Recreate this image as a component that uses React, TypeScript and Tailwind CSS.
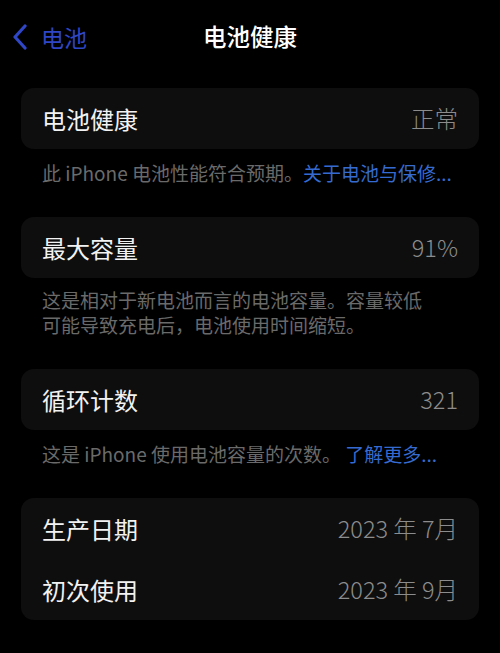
const cjk = { fontFamily: '"Noto Sans CJK SC", "Noto Sans", sans-serif' }

function Row({ label, value }: { label: string; value: string }) {
  return (
    <div className="flex items-center justify-between px-[21px] h-[61px]">
      <span className="text-[24px] text-[#f2f2f2] leading-none">{label}</span>
      <span className="text-[23.5px] font-light text-[#8c8c8c] leading-none">{value}</span>
    </div>
  )
}

function Card({ children }: { children: React.ReactNode }) {
  return <div className="mx-[21px] rounded-[13px] bg-[#0e0e0e]">{children}</div>
}

function Note({ children, className = '' }: { children: React.ReactNode; className?: string }) {
  return (
    <p className={`px-[42px] text-[19px] leading-[25px] text-[#6a6a6a] ${className}`}>{children}</p>
  )
}

export default function App() {
  return (
    <div className="w-[500px] h-[653px] bg-black overflow-hidden" style={cjk}>
      {/* nav bar */}
      <div className="relative h-[74px] flex items-center justify-center">
        <div className="absolute left-[11px] top-[24px] flex items-center gap-[12px] text-[#2f46c6]">
          <svg width="18" height="26" viewBox="0 0 18 26" fill="none">
            <path d="M14 2 L4 13 L14 24" stroke="currentColor" strokeWidth="3.2" strokeLinecap="round" strokeLinejoin="round" />
          </svg>
          <span className="text-[23px] leading-none">电池</span>
        </div>
        <span className="text-[23.5px] font-medium text-white leading-none">电池健康</span>
      </div>

      <div className="pt-[14px]">
        <Card>
          <Row label="电池健康" value="正常" />
        </Card>
        <Note className="pt-[11px]">
          此 iPhone 电池性能符合预期。<span className="text-[#356bd0]">关于电池与保修...</span>
        </Note>

        <div className="h-[32px]" />
        <Card>
          <Row label="最大容量" value="91%" />
        </Card>
        <Note className="pt-[9px]">
          这是相对于新电池而言的电池容量。容量较低
          <br />
          可能导致充电后，电池使用时间缩短。
        </Note>

        <div className="h-[32px]" />
        <Card>
          <Row label="循环计数" value="321" />
        </Card>
        <Note className="pt-[11px]">
          这是 iPhone 使用电池容量的次数。 <span className="text-[#356bd0]">了解更多...</span>
        </Note>

        <div className="h-[32px]" />
        <Card>
          <Row label="生产日期" value="2023 年 7月" />
          <Row label="初次使用" value="2023 年 9月" />
        </Card>
      </div>
    </div>
  )
}
